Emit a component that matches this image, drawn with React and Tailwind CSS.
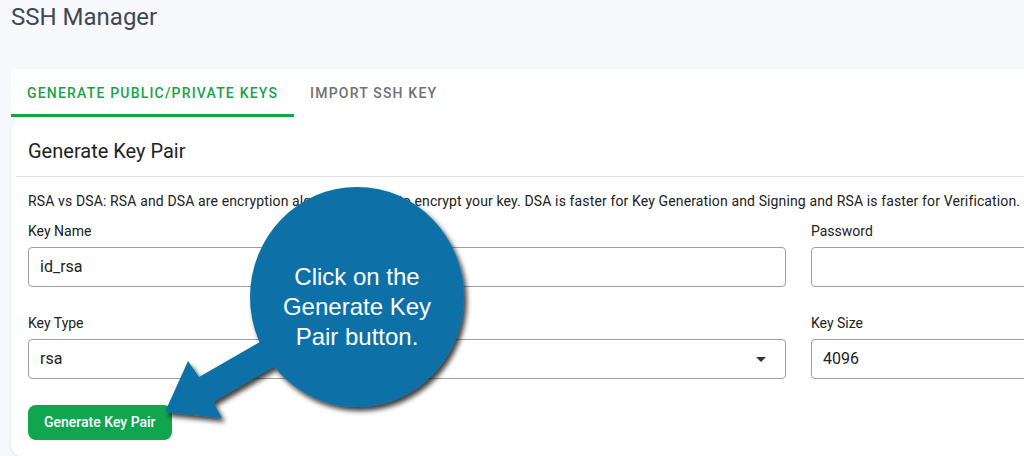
export default function App() {
  return (
    <div className="relative w-[1024px] h-[456px] overflow-hidden bg-[#f7f9fc] font-['Roboto',sans-serif]">
      <h1 className="pl-[11px] text-[24px] leading-[34px] text-[#3f4757]">SSH Manager</h1>

      <div className="ml-[11px] mt-[35px] w-[1400px]">
        {/* tabs */}
        <div className="flex h-[48px] bg-white rounded-tl-[4px]">
          <button className="h-full px-4 border-b-[3px] border-[#16a34a] text-[14px] font-medium tracking-[0.085em] text-[#16a34a] pt-[3px]">
            GENERATE PUBLIC/PRIVATE KEYS
          </button>
          <button className="h-full px-4 text-[14px] font-medium tracking-[0.085em] text-[#707070]">
            IMPORT SSH KEY
          </button>
        </div>

        {/* card */}
        <div className="bg-white rounded-[12px] shadow-sm">
          <div className="pl-[17px] pt-[20px] pb-[11px]">
            <h2 className="text-[20px] leading-[28px] text-[#222]">Generate Key Pair</h2>
          </div>
          <div className="ml-[5px] h-px bg-[#e2e2e2]" />

          <div className="pl-[17px] pt-[14px] pb-[17px]">
            <p className="text-[14px] leading-[20px] tracking-[0.13px] text-[#212121]">
              RSA vs DSA: RSA and DSA are encryption algorithms used to encrypt your key. DSA is faster for Key Generation and Signing and RSA is faster for Verification.
            </p>

            <div className="grid grid-cols-[758px_758px] gap-x-[25px] gap-y-[26px] mt-[10px]">
              <div>
                <label className="block text-[14px] leading-[20px] text-[#212121] mb-[6px]">Key Name</label>
                <div className="h-[40px] border border-[#9e9e9e] rounded-[4px] flex items-center pl-[11px] text-[16px] text-[#222]">id_rsa</div>
              </div>
              <div>
                <label className="block text-[14px] leading-[20px] text-[#212121] mb-[6px]">Password</label>
                <div className="h-[40px] border border-[#9e9e9e] rounded-[4px]" />
              </div>
              <div>
                <label className="block text-[14px] leading-[20px] text-[#212121] mb-[6px]">Key Type</label>
                <div className="h-[40px] border border-[#9e9e9e] rounded-[4px] flex items-center justify-between pl-[11px] pr-[19px] text-[16px] text-[#222]">
                  <span>rsa</span>
                  <svg width="10" height="5" viewBox="0 0 10 5"><path d="M0 0h10L5 5z" fill="#333" /></svg>
                </div>
              </div>
              <div>
                <label className="block text-[14px] leading-[20px] text-[#212121] mb-[6px]">Key Size</label>
                <div className="h-[40px] border border-[#9e9e9e] rounded-[4px] flex items-center pl-[11px] text-[16px] text-[#222]">4096</div>
              </div>
            </div>

            <button className="mt-[26px] h-[35px] px-[16px] rounded-[8px] bg-[#10a54f] text-white text-[14px] font-medium">
              Generate Key Pair
            </button>
          </div>
        </div>
      </div>

      {/* callout annotation */}
      <svg className="absolute left-0 top-0" width="1024" height="456" viewBox="0 0 1024 456">
        <defs>
          <filter id="sh" x="-20%" y="-20%" width="140%" height="140%">
            <feDropShadow dx="3" dy="4" stdDeviation="2.5" floodColor="#000" floodOpacity="0.75" />
          </filter>
        </defs>
        <g filter="url(#sh)" fill="#0b71a8">
          <ellipse cx="357" cy="297" rx="107" ry="110" />
          <polygon points="165,412 188,361 199,377 321,307 333,332 213,402 222,418" />
        </g>
      </svg>
      <div className="absolute left-[257px] top-[262px] w-[200px] text-center text-white text-[24px] leading-[30px] font-['Liberation_Sans',Arial,sans-serif]">
        Click on the<br />Generate Key<br />Pair button.
      </div>
    </div>
  );
}
